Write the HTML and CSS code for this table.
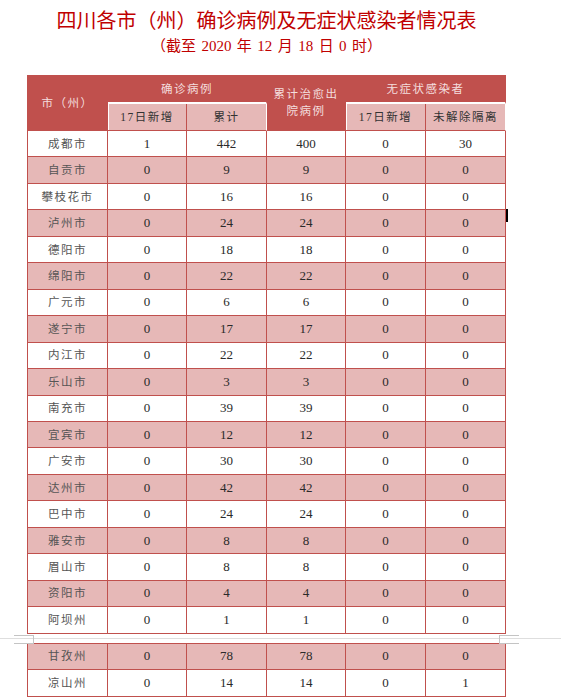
FILE: index.html
```html
<!DOCTYPE html>
<html lang="zh-CN">
<head>
<meta charset="utf-8">
<title>四川各市（州）确诊病例及无症状感染者情况表</title>
<link rel="stylesheet" href="styles.css">
</head>
<body>
<div class="doc">
  <h1 class="title">四川各市（州）确诊病例及无症状感染者情况表</h1>
  <p class="subtitle">（截至 2020 年 12 月 18 日 0 时）</p>
  <table class="grid">
    <colgroup>
      <col class="w80"><col class="w79"><col class="w80"><col class="w79"><col class="w80"><col class="w80">
    </colgroup>
    <thead>
      <tr class="h1row">
        <th rowspan="2" class="hd">市（州）</th>
        <th colspan="2" class="hd group">确诊病例</th>
        <th rowspan="2" class="hd">累计治愈出院病例</th>
        <th colspan="2" class="hd group">无症状感染者</th>
      </tr>
      <tr class="h2row">
        <th class="sub first">17日新增</th>
        <th class="sub last">累计</th>
        <th class="sub first">17日新增</th>
        <th class="sub last">未解除隔离</th>
      </tr>
    </thead>
    <tbody>
      <tr class="row"><td class="name">成都市</td><td>1</td><td>442</td><td>400</td><td>0</td><td>30</td></tr>
      <tr class="row pink"><td class="name">自贡市</td><td>0</td><td>9</td><td>9</td><td>0</td><td>0</td></tr>
      <tr class="row"><td class="name">攀枝花市</td><td>0</td><td>16</td><td>16</td><td>0</td><td>0</td></tr>
      <tr class="row pink"><td class="name">泸州市</td><td>0</td><td>24</td><td>24</td><td>0</td><td>0</td></tr>
      <tr class="row"><td class="name">德阳市</td><td>0</td><td>18</td><td>18</td><td>0</td><td>0</td></tr>
      <tr class="row pink"><td class="name">绵阳市</td><td>0</td><td>22</td><td>22</td><td>0</td><td>0</td></tr>
      <tr class="row"><td class="name">广元市</td><td>0</td><td>6</td><td>6</td><td>0</td><td>0</td></tr>
      <tr class="row pink"><td class="name">遂宁市</td><td>0</td><td>17</td><td>17</td><td>0</td><td>0</td></tr>
      <tr class="row"><td class="name">内江市</td><td>0</td><td>22</td><td>22</td><td>0</td><td>0</td></tr>
      <tr class="row pink"><td class="name">乐山市</td><td>0</td><td>3</td><td>3</td><td>0</td><td>0</td></tr>
      <tr class="row"><td class="name">南充市</td><td>0</td><td>39</td><td>39</td><td>0</td><td>0</td></tr>
      <tr class="row pink"><td class="name">宜宾市</td><td>0</td><td>12</td><td>12</td><td>0</td><td>0</td></tr>
      <tr class="row"><td class="name">广安市</td><td>0</td><td>30</td><td>30</td><td>0</td><td>0</td></tr>
      <tr class="row pink"><td class="name">达州市</td><td>0</td><td>42</td><td>42</td><td>0</td><td>0</td></tr>
      <tr class="row"><td class="name">巴中市</td><td>0</td><td>24</td><td>24</td><td>0</td><td>0</td></tr>
      <tr class="row pink"><td class="name">雅安市</td><td>0</td><td>8</td><td>8</td><td>0</td><td>0</td></tr>
      <tr class="row"><td class="name">眉山市</td><td>0</td><td>8</td><td>8</td><td>0</td><td>0</td></tr>
      <tr class="row pink"><td class="name">资阳市</td><td>0</td><td>4</td><td>4</td><td>0</td><td>0</td></tr>
      <tr class="row"><td class="name">阿坝州</td><td>0</td><td>1</td><td>1</td><td>0</td><td>0</td></tr>
    </tbody>
  </table>
  <div class="pagebreak">
    <span class="gapline"></span>
    <span class="mark mark-l"></span>
    <span class="mark mark-r"></span>
  </div>
  <table class="grid cont">
    <colgroup>
      <col class="w80"><col class="w79"><col class="w80"><col class="w79"><col class="w80"><col class="w80">
    </colgroup>
    <tbody>
      <tr class="row2 pink"><td class="name">甘孜州</td><td>0</td><td>78</td><td>78</td><td>0</td><td>0</td></tr>
      <tr class="row2"><td class="name">凉山州</td><td>0</td><td>14</td><td>14</td><td>0</td><td>1</td></tr>
    </tbody>
  </table>
  <span class="cursor"></span>
</div>
</body>
</html>
```

FILE: styles.css
```css
body {
  margin: 0;
  background: #ffffff;
}

.doc {
  position: relative;
  width: 479px;
  margin-left: 27px;
  padding-top: 8px;
}

.title {
  margin: 0;
  font: 400 20px/24px "Noto Sans CJK SC", sans-serif;
  color: #c00000;
  text-align: center;
}

.subtitle {
  margin: 4px 0 0;
  font: 400 15px/20px "Liberation Serif", "Noto Sans CJK SC", serif;
  word-spacing: 1.7px;
  color: #c00000;
  text-align: center;
}

.grid {
  border-collapse: separate;
  border-spacing: 0;
  table-layout: fixed;
  width: 479px;
  border-left: 1px solid #c0504d;
  border-top: 1px solid #c0504d;
  margin-top: 19px;
  font-family: "Liberation Serif", "Noto Sans CJK SC", serif;
}

.grid.cont {
  margin-top: 0;
}

.w80 { width: 80px; }
.w79 { width: 79px; }

.grid th,
.grid td {
  padding: 0;
  border-right: 1px solid #c0504d;
  border-bottom: 1px solid #c0504d;
  text-align: center;
  vertical-align: middle;
  font-weight: 400;
}

.h1row { height: 28px; }
.h2row { height: 27px; }
.row { height: 26.46px; }
.row2 { height: 26.5px; }

.hd {
  background: #c0504d;
  color: #f4dede;
  font-size: 11.5px;
  line-height: 17px;
  letter-spacing: 1.5px;
}

.grid th.hd {
  padding: 0 6px;
}

.grid th.group {
  border-bottom: 2px solid #ffffff;
}

.sub {
  background: #e6b8b7;
  color: #333333;
  font-size: 11.5px;
  line-height: 17px;
  letter-spacing: 1.5px;
}

.sub.first {
  box-shadow: inset 1px 0 0 #ffffff;
}

.grid th.sub.last {
  border-right-color: #ffffff;
}

.grid td {
  font-size: 13px;
  line-height: 16px;
  color: #2a2a2a;
  background: #ffffff;
}

.grid td.name {
  font-size: 11.5px;
  letter-spacing: 1.5px;
  color: #555555;
}

.grid tr.pink td {
  background: #e6b8b7;
}

.pagebreak {
  position: relative;
  height: 9px;
}

.gapline {
  position: absolute;
  left: -27px;
  top: 4px;
  width: 561px;
  height: 1px;
  background: #dedede;
}

.mark {
  position: absolute;
  top: 1px;
  width: 19px;
  height: 7px;
  border: 1px solid #c4c4c4;
}

.mark-l {
  left: -13px;
  border-left: 0;
}

.mark-r {
  left: 472px;
  border-right: 0;
}

.cursor {
  position: absolute;
  left: 479px;
  top: 209px;
  width: 2px;
  height: 13px;
  background: #000000;
}
```
